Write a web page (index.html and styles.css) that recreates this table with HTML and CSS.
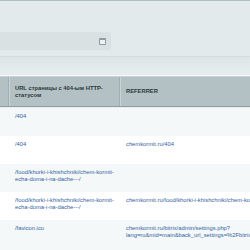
FILE: index.html
```html
<!DOCTYPE html>
<html>
<head>
<meta charset="utf-8">
<link rel="stylesheet" href="styles.css">
</head>
<body>
<div class="page">
  <div class="top">
    <div class="filter"><span class="ico"></span></div>
  </div>
  <div class="band"></div>
  <div class="grid">
    <div class="head">
      <div class="c c1"></div>
      <div class="c c2">URL страницы с 404-ым HTTP-статусом</div>
      <div class="c c3">REFERRER</div>
    </div>
    <div class="row alt">
      <div class="c c1"></div>
      <div class="c c2"><a>/404</a></div>
      <div class="c c3"></div>
    </div>
    <div class="row">
      <div class="c c1"></div>
      <div class="c c2"><a>/404</a></div>
      <div class="c c3"><a>chemkormit.ru/404</a></div>
    </div>
    <div class="row alt">
      <div class="c c1"></div>
      <div class="c c2"><a>/food/khorki-i-khishchniki/chem-kormit-echa-doma-i-na-dache---/</a></div>
      <div class="c c3"></div>
    </div>
    <div class="row">
      <div class="c c1"></div>
      <div class="c c2"><a>/food/khorki-i-khishchniki/chem-kormit-echa-doma-i-na-dache---/</a></div>
      <div class="c c3 nowrap"><a>chemkormit.ru/food/khorki-i-khishchniki/chem-kormit-echa-doma-i-na-dache---/</a></div>
    </div>
    <div class="row alt">
      <div class="c c1"></div>
      <div class="c c2"><a>/favicon.ico</a></div>
      <div class="c c3 nowrap"><a>chemkormit.ru/bitrix/admin/settings.php?<br>lang=ru&amp;mid=main&amp;back_url_settings=%2Fbitrix%2Fadmin%2F</a></div>
    </div>
  </div>
</div>
</body>
</html>
```

FILE: styles.css
```css
html, body {
  margin: 0;
  padding: 0;
  overflow: hidden;
  background: #f4f8f9;
}
.page {
  width: 250px;
  height: 250px;
  overflow: hidden;
  font-family: "Liberation Sans", Arial, sans-serif;
}
.top {
  height: 56px;
  border-top: 1px solid #aebbbf;
  background: #e3eaec;
  box-sizing: border-box;
  padding-top: 31px;
}
.filter {
  width: 111px;
  height: 18px;
  background: #d9e1e3;
  border-radius: 0 2px 2px 0;
  display: flex;
  align-items: center;
  justify-content: flex-end;
  padding-right: 5px;
  box-sizing: border-box;
}
.ico {
  width: 5px;
  height: 4px;
  border: 1px solid #8d9ca0;
  border-top-width: 2px;
  border-radius: 1px;
  background: #eef2f3;
}
.band {
  height: 18px;
  border-top: 1px solid #d3dcdf;
  background: linear-gradient(#dde5e7, #e6edef);
  border-bottom: 1px solid #f6f9fa;
}
.grid {
  width: 420px;
}
.head {
  display: grid;
  grid-template-columns: 9px 111px 1fr;
  height: 29px;
  border-top: 1px solid #c9d3d6;
  background: #b3c1c4;
  border-bottom: 1px solid #8e9fa3;
  box-shadow: 0 1px 0 #e8eef0;
  margin-bottom: 1px;
  color: #2c373a;
  font-weight: bold;
  font-size: 5.8px;
  line-height: 7px;
}
.head .c {
  display: flex;
  align-items: center;
  padding-left: 6px;
  border-right: 1px solid #9fafb3;
  box-shadow: inset 1px 0 0 #c8d3d6;
}
.head .c2 { padding-right: 10px; }
.head .c1 { padding-left: 0; box-shadow: none; }
.row {
  display: grid;
  grid-template-columns: 9px 111px 1fr;
  height: 28px;
  background: #ffffff;
  font-size: 5.8px;
  line-height: 6.8px;
}
.row.alt { background: #f4f8f9; }
.row .c {
  padding: 5px 6px 0 6px;
  overflow: hidden;
}
.row .c1 { padding: 0; }
.row .c2 { padding-right: 6px; }
.nowrap { white-space: nowrap; }
a {
  color: #35609e;
  text-decoration: none;
}
```
